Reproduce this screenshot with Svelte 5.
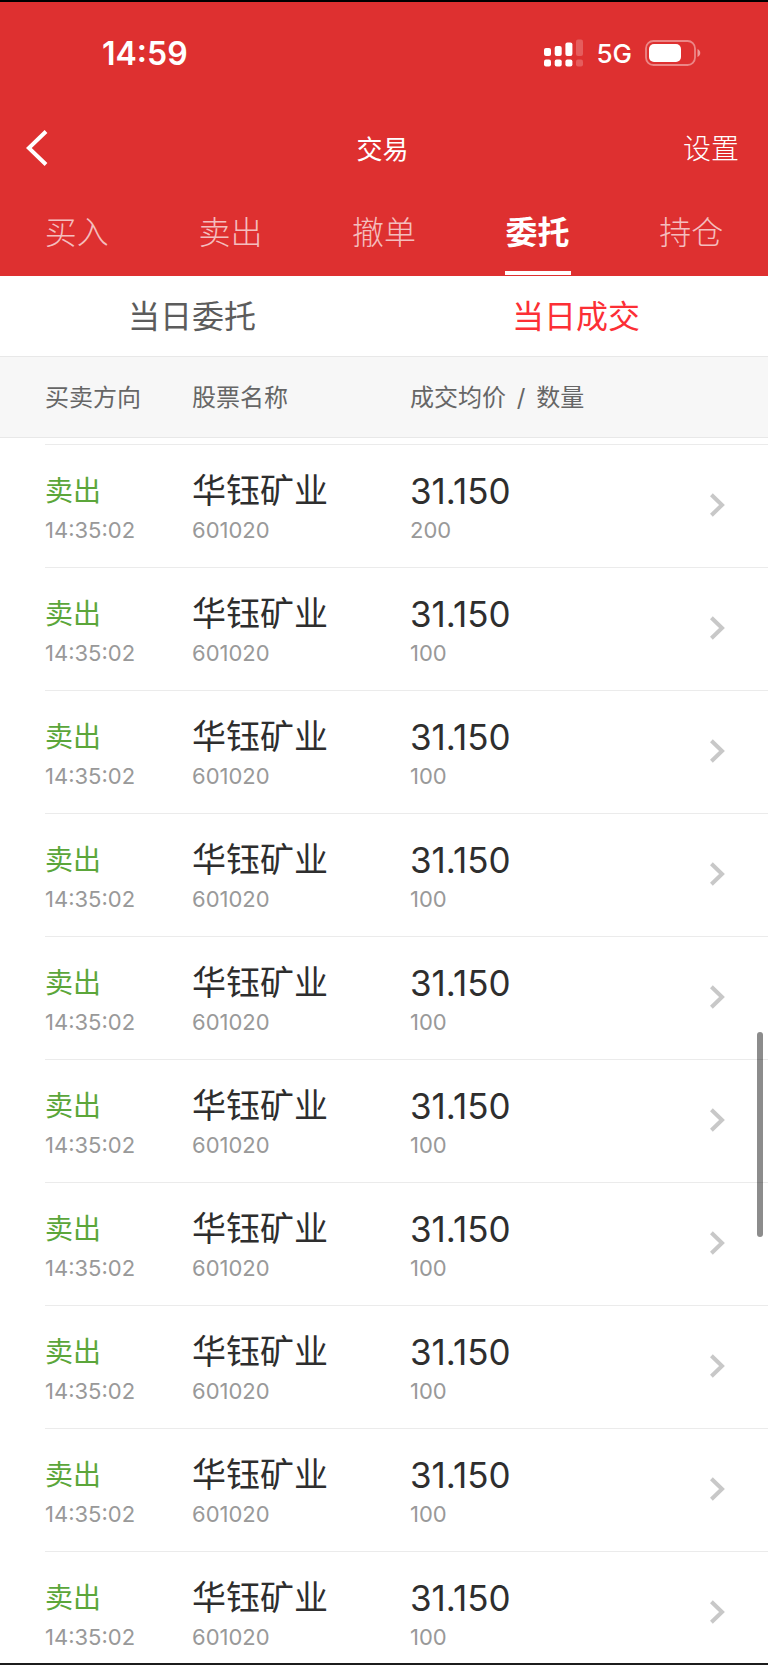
<script>
	const tabs = ['买入', '卖出', '撤单', '委托', '持仓'];
	const subTabs = ['当日委托', '当日成交'];

	let activeTab = '委托';
	let activeSub = '当日成交';

	const amounts = [200, 100, 100, 100, 100, 100, 100, 100, 100, 100];

	const deals = amounts.map((amount) => ({
		side: '卖出',
		time: '14:35:02',
		name: '华钰矿业',
		code: '601020',
		price: '31.150',
		amount,
	}));
</script>

<main>
	<header>
		<div class="status">
			<span class="clock">14:59</span>
			<div class="status-right">
				<svg width="39" height="28" viewBox="0 0 39 28" fill="#fff" aria-hidden="true">
					<rect x="0" y="9" width="7" height="8" rx="2" />
					<rect x="10.7" y="7" width="7" height="10" rx="2" />
					<rect x="21.4" y="3.5" width="7" height="13.5" rx="2" />
					<rect x="32" y="0.5" width="7" height="16.5" rx="2" opacity=".22" />
					<rect x="0" y="20.5" width="7" height="7" rx="2" />
					<rect x="10.7" y="20.5" width="7" height="7" rx="2" />
					<rect x="21.4" y="20.5" width="7" height="7" rx="2" />
					<rect x="32" y="20.5" width="7" height="7" rx="2" opacity=".22" />
				</svg>
				<span class="network">5G</span>
				<svg width="56" height="26" viewBox="0 0 56 26" fill="#fff" aria-hidden="true">
					<rect x="1" y="1" width="49" height="24" rx="7.5" fill="none" stroke="#fff" stroke-width="1.8" opacity=".42" />
					<rect x="4" y="4" width="32" height="18" rx="5" />
					<path d="M52.5 9 C56.2 10.4 56.2 15.6 52.5 17 Z" opacity=".5" />
				</svg>
			</div>
		</div>

		<div class="navbar">
			<button class="back" aria-label="返回">
				<svg width="22" height="36" viewBox="0 0 22 36" fill="none" stroke="#fff" stroke-width="4" aria-hidden="true">
					<path d="M20 1.5 L2.8 18 L20 34.5" />
				</svg>
			</button>
			<h1>交易</h1>
			<button class="settings">设置</button>
		</div>

		<nav class="tabs">
			{#each tabs as tab}
				<button class:active={tab === activeTab} on:click={() => (activeTab = tab)}>{tab}</button>
			{/each}
		</nav>
	</header>

	<div class="sub-tabs">
		{#each subTabs as sub}
			<button class:active={sub === activeSub} on:click={() => (activeSub = sub)}>{sub}</button>
		{/each}
	</div>

	<div class="list">
		<table>
			<thead>
				<tr>
					<th>买卖方向</th>
					<th>股票名称</th>
					<th>成交均价 <span class="slash">/</span> 数量</th>
				</tr>
			</thead>
			<tbody>
				{#each deals as deal}
					<tr>
						<td>
							<div class="top side">{deal.side}</div>
							<div class="bottom">{deal.time}</div>
						</td>
						<td>
							<div class="top name">{deal.name}</div>
							<div class="bottom">{deal.code}</div>
						</td>
						<td>
							<div class="top price">{deal.price}</div>
							<div class="bottom">{deal.amount}</div>
						</td>
						<td class="more">
							<button aria-label="查看详情">
								<svg width="16" height="24" viewBox="0 0 16 24" fill="none" stroke="#c8c8c8" stroke-width="4" aria-hidden="true">
									<path d="M2.4 1.8 L13 12 L2.4 22.2" />
								</svg>
							</button>
						</td>
					</tr>
				{/each}
			</tbody>
		</table>
	</div>
	<div class="thumb"></div>
</main>

<style>
	:global(body) {
		background: #fff;
	}
	main {
		position: relative;
		display: flex;
		flex-direction: column;
		box-sizing: border-box;
		height: 100vh;
		border-top: 2px solid #000;
		border-bottom: 2px solid #1c1c1c;
		font-family: Inter, "Noto Sans CJK SC", sans-serif;
		font-weight: 400;
		color: #2e2e2e;
	}
	button {
		padding: 0;
		border: none;
		background: none;
		font: inherit;
		color: inherit;
		cursor: pointer;
	}
	svg {
		display: block;
	}

	header {
		flex: none;
		background: #de3030;
		color: #fff;
	}
	.status {
		display: flex;
		justify-content: space-between;
		align-items: center;
		height: 102px;
		padding: 0 67px 0 102px;
	}
	.clock {
		font-size: 32px;
		font-weight: 600;
	}
	.status-right {
		display: flex;
		align-items: center;
		gap: 13px;
	}
	.network {
		font-size: 26px;
		font-weight: 500;
	}
	.navbar {
		display: grid;
		grid-template-columns: 1fr auto 1fr;
		align-items: center;
		height: 88px;
		padding: 0 29px 0 26px;
	}
	.back {
		justify-self: start;
	}
	h1 {
		margin: 0;
		padding-bottom: 2px;
		font-size: 26px;
		font-weight: 400;
	}
	.settings {
		justify-self: end;
		padding-bottom: 2px;
		font-size: 28px;
		font-weight: 300;
	}
	.tabs {
		display: flex;
		height: 84px;
	}
	.tabs button {
		position: relative;
		flex: 1;
		padding-bottom: 8px;
		font-size: 32px;
		font-weight: 300;
		color: rgba(255, 255, 255, 0.7);
	}
	.tabs .active {
		font-weight: 700;
		color: #fff;
	}
	.tabs .active::after {
		content: "";
		position: absolute;
		left: 50%;
		bottom: 1px;
		width: 66px;
		height: 4px;
		margin-left: -33px;
		background: #fff;
	}

	.sub-tabs {
		display: flex;
		flex: none;
		height: 80px;
		border-bottom: 1px solid #e8e8e8;
	}
	.sub-tabs button {
		flex: 1;
		padding-bottom: 4px;
		font-size: 32px;
		color: #5c5c5c;
	}
	.sub-tabs .active {
		color: #fc2f35;
	}

	.list {
		flex: 1;
		min-height: 0;
		overflow-y: auto;
		scrollbar-width: none;
	}
	table,
	thead,
	tbody {
		display: block;
	}
	tr {
		display: grid;
		grid-template-columns: 147px 218px 1fr auto;
		box-sizing: border-box;
	}
	th,
	td {
		padding: 0;
		text-align: left;
	}
	thead {
		position: sticky;
		top: 0;
		background: #f7f7f7;
		border-bottom: 1px solid #e8e8e8;
	}
	thead tr {
		align-items: center;
		height: 80px;
		padding: 0 0 4px 45px;
	}
	th {
		font-size: 24px;
		font-weight: 400;
		color: #666;
	}
	.slash {
		margin: 0 4px;
	}
	tbody {
		padding-top: 6px;
	}
	tbody tr {
		height: 123px;
		margin-left: 45px;
		padding: 24px 43px 0 0;
		border-top: 1px solid #ebebeb;
	}
	.top {
		height: 44px;
		line-height: 44px;
	}
	.bottom {
		height: 34px;
		font-size: 22px;
		line-height: 34px;
		color: #999;
	}
	.side {
		font-size: 28px;
		color: #5ba63a;
	}
	.name {
		font-size: 34px;
	}
	.price {
		font-size: 35px;
	}
	.more button {
		display: block;
		margin-top: 24px;
	}

	/* scroll indicator floats over the rows */
	.thumb {
		position: absolute;
		top: 62%;
		right: 5px;
		width: 6px;
		height: 205px;
		border-radius: 3px;
		background: rgba(0, 0, 0, 0.45);
	}
</style>
